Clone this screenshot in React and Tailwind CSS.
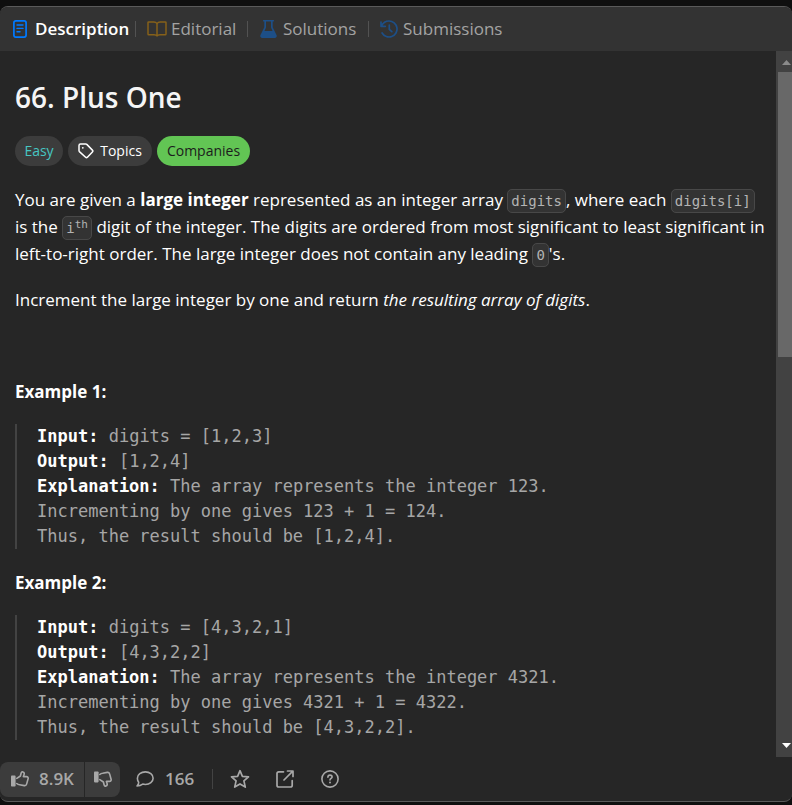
const stroke = {
  fill: "none",
  stroke: "currentColor",
  strokeLinecap: "round",
  strokeLinejoin: "round",
};

function DocIcon() {
  return (
    <svg viewBox="0 0 14 18" className="h-[18px] w-[14px] shrink-0 text-[#007aff]" {...stroke} strokeWidth="1.7" aria-hidden="true">
      <rect x="0.9" y="0.9" width="12.2" height="16.2" rx="2" />
      <path d="M4 5h6M4 8.4h6M4 11.8h3" strokeWidth="1.4" />
    </svg>
  );
}

function BookIcon() {
  return (
    <svg viewBox="0 0 20 16" className="h-[16px] w-[20px] shrink-0 text-[#86611a]" {...stroke} strokeWidth="1.5" aria-hidden="true">
      <path d="M10 2.6C9.2 1.4 8.2 1 6.8 1H1.6Q1 1 1 1.6V13q0 .8.8.8H7c1.500 0 2.500.3 3 1.200.5-.9 1.500-1.200 3-1.200h5.200q.8 0 .8-.8V1.600Q19 1 18.400 1h-5.200c-1.400 0-2.400.4-3.200 1.600zV14.600" />
    </svg>
  );
}

function FlaskIcon() {
  return (
    <svg viewBox="0 0 17 18" className="h-[18px] w-[17px] shrink-0 text-[#1d4f87]" aria-hidden="true">
      <path fill="currentColor" fillRule="evenodd" d="M3.600 0h9.800q.7 0 .7.800t-.7.800h-.7v5.600l3.800 7.800c.7 1.500-.1 3-1.600 3H2.100C.6 18-.2 16.500.5 15l3.800-7.800V1.600h-.7q-.7 0-.7-.8T3.600 0zM6 1.600v6L4.500 11h8L11 7.600v-6z" />
    </svg>
  );
}

function HistoryIcon() {
  return (
    <svg viewBox="0 0 18 18" className="h-[18px] w-[18px] shrink-0 text-[#1d4f87]" {...stroke} strokeWidth="1.700" aria-hidden="true">
      <path d="M1 2v4.300h4.300M1.500 6C3 2.900 5.600 1 9 1a8 8 0 1 1-6.900 12M9.300 5.200v4.200l2.500 2.300" />
    </svg>
  );
}

function TagIcon() {
  return (
    <svg viewBox="0 0 16 16" className="h-[16px] w-[16px] shrink-0" {...stroke} strokeWidth="1.500" aria-hidden="true">
      <path d="M1 2.500Q1 1 2.500 1h5.300q.6 0 1 .4l5.600 5.700q.9.900 0 1.800l-5 5.300q-.9.900-1.800 0L1.400 8.600Q1 8.200 1 7.600z" />
      <circle cx="4.800" cy="4.800" r="0.900" fill="currentColor" stroke="none" />
    </svg>
  );
}

function ThumbIcon({ down }) {
  return (
    <svg
      viewBox="0 0 18 16"
      className={down ? "h-[16px] w-[18px] shrink-0 -scale-y-100" : "h-[16px] w-[18px] shrink-0"}
      {...stroke}
      strokeWidth="1.600"
      aria-hidden="true"
    >
      <rect x="0" y="4.600" width="4.600" height="11" rx="0.800" fill="currentColor" stroke="none" />
      <path d="M5.800 7.400 9.400 5l.7-2.800C10.400 1 11.200.7 12 1c1.200.4 1.400 1.600 1 2.800L12.400 5.600h3c1.400 0 2 1 1.700 2.100l-1.500 5.400c-.3 1.100-1.200 1.700-2.300 1.500L8.600 13.800q-1.600-.2-2.800-1.300" />
    </svg>
  );
}

function CommentIcon() {
  return (
    <svg viewBox="0 0 18 16" className="h-[16px] w-[18px] shrink-0" {...stroke} strokeWidth="1.600" aria-hidden="true">
      <path d="M9.400.9c4.300 0 7.700 2.700 7.700 6.300s-3.400 6.300-7.700 6.300c-1 0-1.900-.1-2.700-.4C5.200 14.300 3.400 15 1 15c1.300-1.200 1.800-2.400 1.700-3.700C1.700 10.200 1.400 8.900 1.400 7.200 1.400 3.600 5.100.9 9.400.9z" />
    </svg>
  );
}

function StarIcon() {
  return (
    <svg viewBox="0 0 20 20" className="h-[20px] w-[20px]" {...stroke} strokeWidth="1.700" aria-hidden="true">
      <path d="m10 1.700 2.400 5.600 6.100.6-4.600 4 1.400 6.200-5.300-3.200-5.300 3.200 1.400-6.200-4.600-4 6.100-.6z" />
    </svg>
  );
}

function ShareIcon() {
  return (
    <svg viewBox="0 0 18 18" className="h-[18px] w-[18px]" {...stroke} strokeWidth="1.700" aria-hidden="true">
      <path d="M7.500 1.800H2.800Q1 1.800 1 3.600v11.600Q1 17 2.800 17h11.600q1.800 0 1.800-1.800v-4.700M11.500 1H17v5.500M16.800 1.200 8 10" />
    </svg>
  );
}

function HelpIcon() {
  return (
    <svg viewBox="0 0 18 18" className="h-[18px] w-[18px]" {...stroke} strokeWidth="1.600" aria-hidden="true">
      <circle cx="9" cy="9" r="8.100" />
      <path d="M6.900 7.200C6.900 5.800 7.800 5.100 9 5.100s2.100.7 2.100 1.800c0 1.300-2.100 1.500-2.100 3" />
      <circle cx="9" cy="12.600" r="1" fill="currentColor" stroke="none" />
    </svg>
  );
}

function Divider() {
  return <span className="h-4 w-px shrink-0 bg-[#525252]" />;
}

function Code({ children }) {
  return (
    <code className="rounded-[5px] border border-[#484848] bg-[#333333] px-[3px] py-[3px] font-['DejaVu_Sans_Mono',monospace] text-sm leading-none text-[#b4b4b4]">
      {children}
    </code>
  );
}

function Example({ input, output, lines }) {
  return (
    <pre className="mb-5 border-l-2 border-[#434343] pl-5 font-['DejaVu_Sans_Mono',monospace] text-[17px] leading-[25px] text-[#a6a6a6]">
      <strong className="text-white">Input:</strong> {input}
      {"\n"}
      <strong className="text-white">Output:</strong> {output}
      {"\n"}
      <strong className="text-white">Explanation:</strong> {lines.join("\n")}
    </pre>
  );
}

export default function App() {
  return (
    <div className="h-screen bg-[#0f0f0f] pt-[6px] pb-[3px] font-['Open_Sans','Noto_Sans',sans-serif] text-[17px] text-white">
      <div className="flex h-full flex-col overflow-hidden rounded-lg border-y border-[#5a5a5a] bg-[#262626]">
        <nav className="flex h-11 shrink-0 items-center bg-[#333333] pl-[13px] text-[#a3a3a3]">
          <button className="flex w-[122px] items-center gap-2 font-semibold text-white">
            <DocIcon />
            Description
          </button>
          <Divider />
          <button className="ml-[11px] flex w-[100px] items-center gap-1">
            <BookIcon />
            Editorial
          </button>
          <Divider />
          <button className="ml-3 flex w-[108px] items-center gap-[6px]">
            <FlaskIcon />
            Solutions
          </button>
          <Divider />
          <button className="ml-[11px] flex items-center gap-[5px]">
            <HistoryIcon />
            Submissions
          </button>
        </nav>

        <div className="flex min-h-0 flex-1">
          <main className="min-w-0 flex-1 overflow-hidden pt-7 pr-[10px] pl-[15px]">
            <h1 className="text-[28px] leading-9 font-semibold text-[#f5f5f5]">66. Plus One</h1>
            <div className="mt-[21px] mb-5 flex gap-[5px] text-sm">
              <span className="flex h-[30px] w-12 items-center justify-center rounded-full bg-[#3c3c3c] text-[#46c6c2]">Easy</span>
              <button className="flex h-[30px] w-[84px] items-center justify-center gap-[6px] rounded-full bg-[#3c3c3c]">
                <TagIcon />
                Topics
              </button>
              <button className="flex h-[30px] w-[93px] items-center justify-center rounded-full bg-[#62c554] text-[#1c1c1c]">Companies</button>
            </div>

            <div className="leading-[27px]">
              <p className="mb-[19px]">
                You are given a <strong>large integer</strong> represented as an integer array <Code>digits</Code>, where each{" "}
                <Code>digits[i]</Code> is the{" "}
                <Code>
                  i<sup className="text-[11px] leading-none">th</sup>
                </Code>{" "}
                digit of the integer. The digits are ordered from most significant to least significant in left-to-right order. The large
                integer does not contain any leading <Code>0</Code>'s.
              </p>
              <p className="mb-[19px]">
                Increment the large integer by one and return <em>the resulting array of digits</em>.
              </p>
              <p className="mb-[19px]">&nbsp;</p>
              <p className="mb-[19px]">
                <strong>Example 1:</strong>
              </p>
              <Example
                input="digits = [1,2,3]"
                output="[1,2,4]"
                lines={[
                  "The array represents the integer 123.",
                  "Incrementing by one gives 123 + 1 = 124.",
                  "Thus, the result should be [1,2,4].",
                ]}
              />
              <p className="mb-[19px]">
                <strong>Example 2:</strong>
              </p>
              <Example
                input="digits = [4,3,2,1]"
                output="[4,3,2,2]"
                lines={[
                  "The array represents the integer 4321.",
                  "Incrementing by one gives 4321 + 1 = 4322.",
                  "Thus, the result should be [4,3,2,2].",
                ]}
              />
            </div>
          </main>

          <div className="flex w-4 shrink-0 flex-col items-end bg-[#424242]" aria-hidden="true">
            <svg viewBox="0 0 14 21" className="h-[21px] w-[14px] shrink-0">
              <path d="M4 14h9L8.500 9z" fill="#8b8b8b" />
            </svg>
            <div className="h-[285px] w-[14px] bg-[#686868]" />
            <svg viewBox="0 0 14 21" className="mt-auto h-[21px] w-[14px] shrink-0">
              <path d="M4 7h9l-4.500 5z" fill="#ffffff" />
            </svg>
          </div>
        </div>

        <footer className="flex h-11 shrink-0 items-center font-semibold text-[#a8a8a8]">
          <div className="flex h-[35px] gap-px overflow-hidden rounded-lg">
            <button className="flex w-[84px] items-center gap-[10px] bg-[#3c3c3c] pl-[11px]">
              <ThumbIcon />
              8.9K
            </button>
            <button className="flex w-[35px] items-center justify-center bg-[#3c3c3c]" aria-label="Dislike">
              <ThumbIcon down />
            </button>
          </div>
          <button className="ml-4 flex w-[76px] items-center gap-[11px]">
            <CommentIcon />
            166
          </button>
          <span className="h-5 w-px bg-[#434343]" />
          <button className="ml-[17px]" aria-label="Favourite">
            <StarIcon />
          </button>
          <button className="ml-[26px]" aria-label="Share">
            <ShareIcon />
          </button>
          <button className="ml-[27px]" aria-label="Help">
            <HelpIcon />
          </button>
        </footer>
      </div>
    </div>
  );
}
